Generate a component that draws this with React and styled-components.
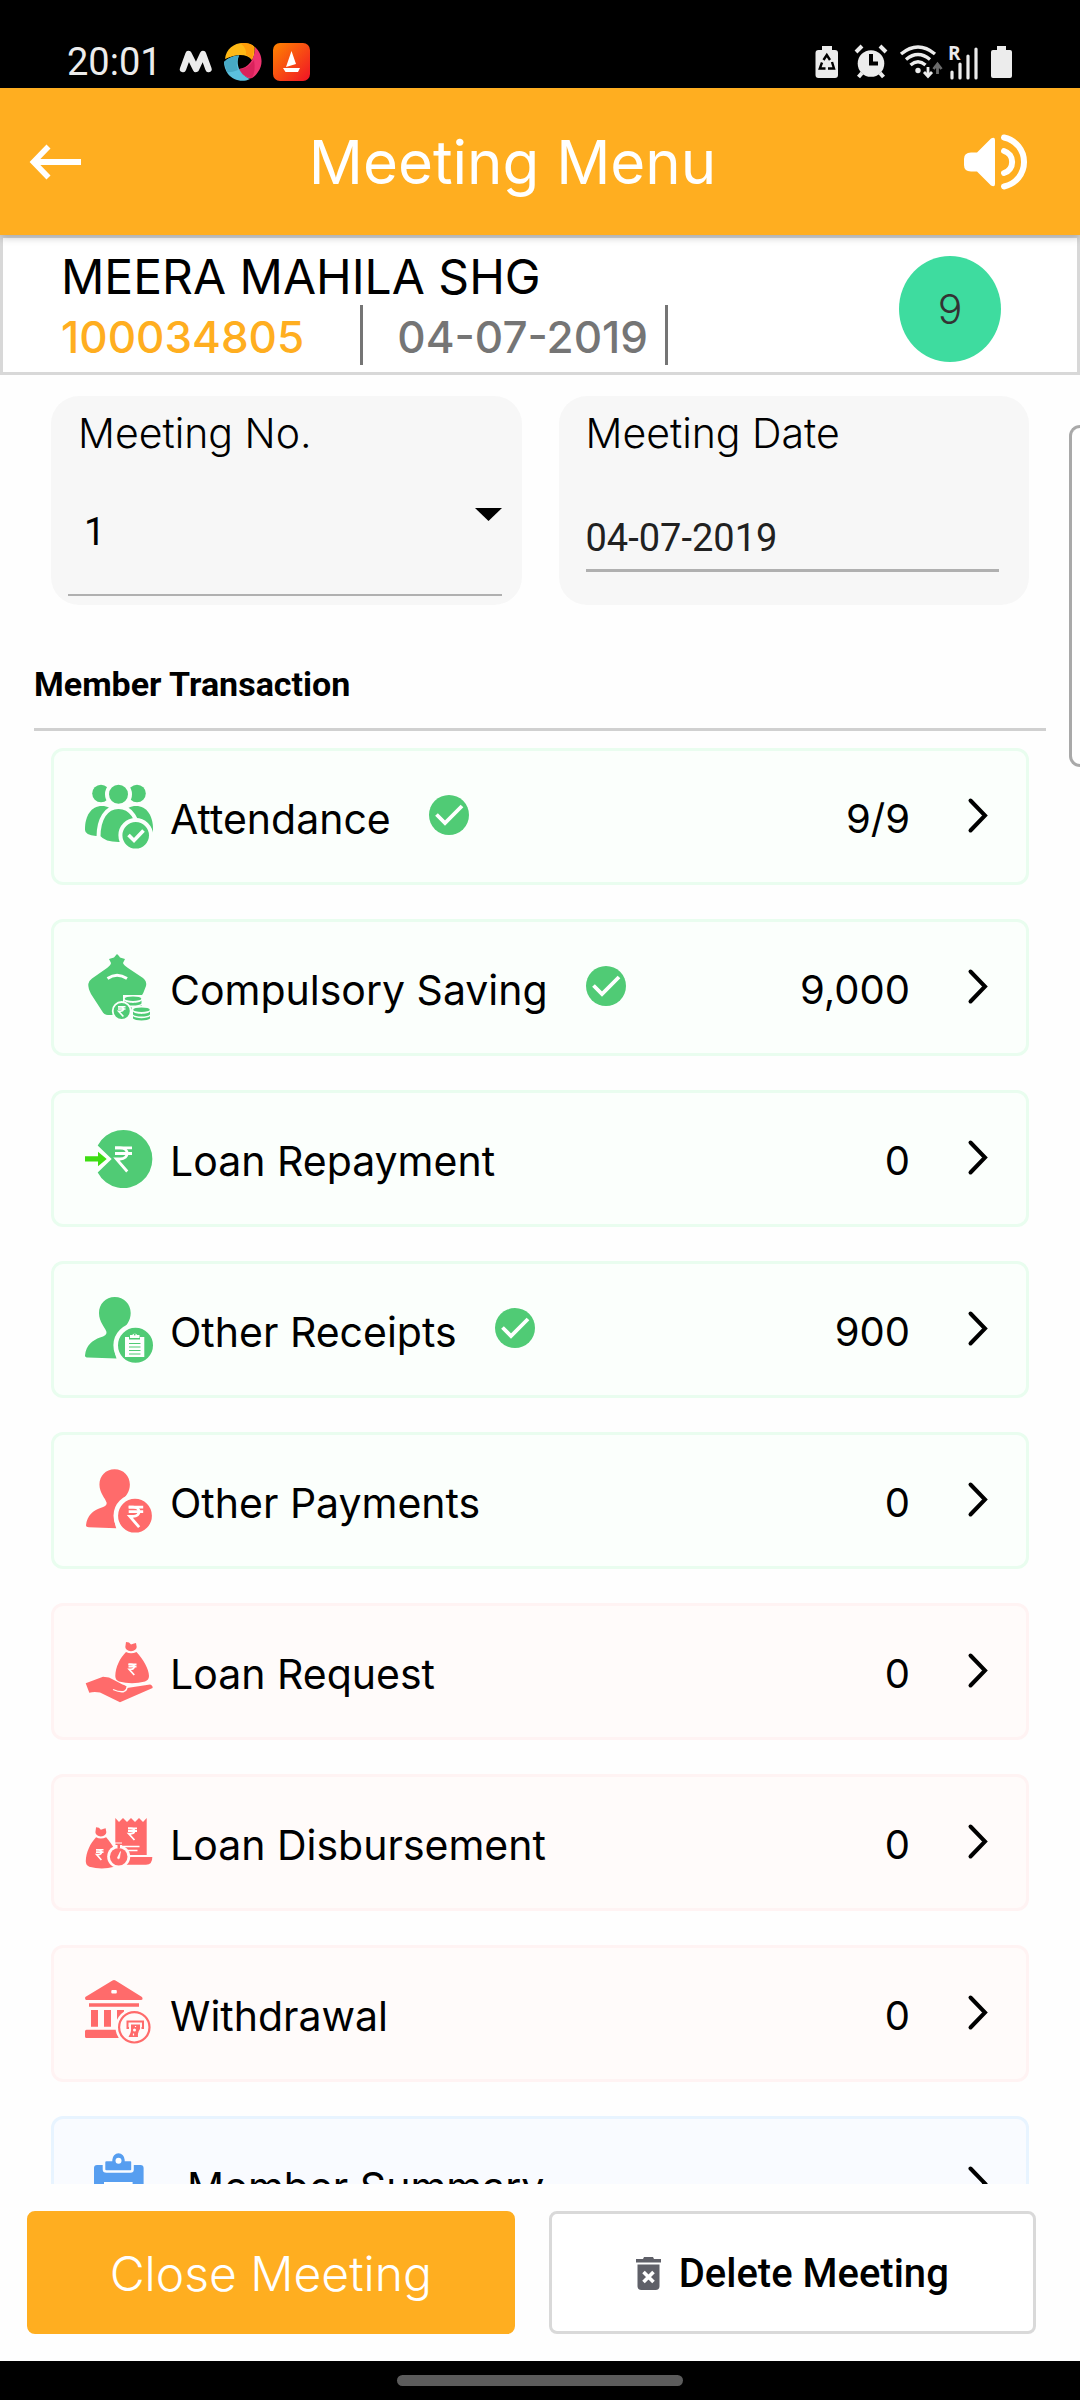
import React from "react";
import styled, { createGlobalStyle } from "styled-components";

const GlobalStyle = createGlobalStyle`
  *, *::before, *::after { box-sizing: border-box; }
  html, body { margin: 0; padding: 0; background: #fff; }
  body { font-family: Inter, "Noto Sans", sans-serif; color: #000; }
  button, input, select { font: inherit; color: inherit; margin: 0; }
  svg { display: block; flex: none; overflow: visible; }
`;

const TONES = {
  green: { fg: "#50cb75", bg: "#fbfffc", border: "#e9fdef" },
  payment: { fg: "#ff6b6b", bg: "#fbfffc", border: "#e9fdef" },
  red: { fg: "#ff6b6b", bg: "#fffbfa", border: "#fff3f3" },
  blue: { fg: "#579ef0", bg: "#f9fbff", border: "#e8f4ff" },
};

const Screen = styled.div`
  position: relative;
  display: flex;
  flex-direction: column;
  height: 100vh;
  overflow: hidden;
  background: #fefefe;
`;

const StatusBar = styled.div`
  display: flex;
  flex: none;
  align-items: flex-end;
  justify-content: space-between;
  height: 88px;
  padding: 0 67px 7px;
  background: #000;
  color: #ececec;
`;

const StatusGroup = styled.div`
  display: flex;
  align-items: center;
  height: 38px;
  gap: ${(p) => p.$gap}px;
`;

const Clock = styled.span`
  margin-right: 6px;
  font-family: Roboto, sans-serif;
  font-size: 38px;
  line-height: 40px;
`;

const Header = styled.header`
  position: relative;
  z-index: 1;
  display: flex;
  flex: none;
  align-items: center;
  height: 147px;
  padding: 0 52px 0 30px;
  background: #ffae20;
  color: #fff;
  box-shadow: 0 2px 8px rgba(0, 0, 0, 0.25);
`;

const IconButton = styled.button`
  display: flex;
  padding: 0 0 0 ${(p) => p.$lead || 0}px;
  border: 0;
  background: none;
  cursor: pointer;
`;

const Title = styled.h1`
  flex: 1;
  margin: 0;
  font-size: 60px;
  font-weight: 400;
  line-height: 68px;
  text-align: center;
`;

const GroupBar = styled.section`
  display: flex;
  flex: none;
  align-items: center;
  justify-content: space-between;
  height: 140px;
  padding: 4px 76px 0 58px;
  border: 3px solid #d8d8d8;
  background: #fff;
`;

const GroupName = styled.h2`
  margin: 0;
  font-size: 48px;
  font-weight: 400;
  line-height: 56px;
`;

const GroupMeta = styled.div`
  display: flex;
  font-size: 44px;
  font-weight: 500;
  line-height: 56px;
`;

const GroupId = styled.span`
  padding: 4px 56px 0 0;
  border-right: 3px solid #757575;
  color: #ffae20;
`;

const GroupDate = styled.span`
  padding: 4px 17px 0 34px;
  border-right: 3px solid #757575;
  color: #757575;
`;

const CountBadge = styled.div`
  display: flex;
  align-items: center;
  justify-content: center;
  width: 102px;
  height: 106px;
  margin-top: 4px;
  border-radius: 50%;
  background: #3edc9f;
  color: #333;
  font-size: 41px;
  font-weight: 300;
`;

const Main = styled.main`
  flex: 1;
  min-height: 0;
  overflow-y: auto;
  scrollbar-width: none;
`;

const Fields = styled.div`
  display: grid;
  grid-template-columns: repeat(2, minmax(0, 1fr));
  gap: 37px;
  padding: 21px 51px 0;
`;

const Field = styled.div`
  display: flex;
  flex-direction: column;
  height: 209px;
  padding-top: 13px;
  border-radius: 28px;
  background: #f7f7f7;
`;

const FieldLabel = styled.label`
  padding: 0 27px;
  font-size: 41px;
  font-weight: 300;
  line-height: 48px;
`;

const SelectBox = styled.div`
  display: grid;
  margin: 0 20px 0 17px;

  > * {
    grid-area: 1 / 1;
  }

  > svg {
    justify-self: end;
    margin-top: 51px;
    pointer-events: none;
  }
`;

const Select = styled.select`
  appearance: none;
  width: 100%;
  height: 139px;
  padding: 12px 40px 0 16px;
  border: 0;
  border-bottom: 2px solid #b0b0b0;
  border-radius: 0;
  background: none;
  font-family: Roboto, sans-serif;
  font-size: 38px;
`;

const DateInput = styled.input`
  height: 115px;
  margin: 0 30px 0 27px;
  padding: 49px 0 0;
  border: 0;
  border-bottom: 3px solid #b0b0b0;
  background: none;
  color: #212121;
  font-family: Roboto, sans-serif;
  font-size: 38px;
`;

const SectionTitle = styled.h2`
  margin: 55px 34px 17px;
  padding-bottom: 20px;
  border-bottom: 3px solid #d0d0d0;
  font-family: Roboto, sans-serif;
  font-size: 34px;
  font-weight: 700;
  line-height: 48px;
`;

const List = styled.ul`
  display: flex;
  flex-direction: column;
  gap: 34px;
  margin: 0;
  padding: 0 51px 34px;
  list-style: none;
`;

const Row = styled.button`
  display: flex;
  align-items: center;
  width: 100%;
  height: 137px;
  padding: 0 36px 0 31px;
  border: 3px solid ${(p) => TONES[p.$tone].border};
  border-radius: 12px;
  background: ${(p) => TONES[p.$tone].bg};
  color: #000;
  font-size: 41px;
  font-weight: 400;
  line-height: 48px;
  text-align: left;
  cursor: pointer;
`;

const RowLabel = styled.span`
  margin: 4px 38px 0 ${(p) => (p.$indent ? 34 : 17)}px;
`;

const RowValue = styled.span`
  margin: 4px 56px 0 auto;
  font-size: 40px;
`;

const RowMark = styled.svg`
  margin-bottom: 3px;
`;

const Footer = styled.footer`
  display: grid;
  flex: none;
  grid-template-columns: 1fr 1fr;
  gap: 34px;
  padding: 27px 44px 27px 27px;
  background: #fefefe;
`;

const Action = styled.button`
  display: flex;
  align-items: center;
  justify-content: center;
  gap: 18px;
  height: 123px;
  padding: 2px 0 0;
  border: 3px solid ${(p) => (p.$primary ? "#ffae20" : "#d9d9d9")};
  border-radius: 8px;
  background: ${(p) => (p.$primary ? "#ffae20" : "#fff")};
  color: ${(p) => (p.$primary ? "#fff" : "#000")};
  font-family: ${(p) => (p.$primary ? "Inter" : "Roboto")}, sans-serif;
  font-size: ${(p) => (p.$primary ? 48 : 40)}px;
  font-weight: ${(p) => (p.$primary ? 300 : 500)};
  cursor: pointer;
`;

const NavBar = styled.div`
  display: flex;
  flex: none;
  justify-content: center;
  height: 39px;
  padding-top: 14px;
  background: #000;
`;

const NavPill = styled.div`
  width: 286px;
  height: 11px;
  border-radius: 6px;
  background: #5c5c5c;
`;

const EdgeHandle = styled.div`
  position: absolute;
  z-index: 2;
  top: 425px;
  right: 0;
  width: 11px;
  height: 342px;
  border: 3px solid #a9a9a9;
  border-right: 0;
  border-radius: 12px 0 0 12px;
  background: #fff;
`;

function Rupee({ x, y, w, h, s, color = "#fff" }) {
  return (
    <g transform={`translate(${x} ${y})`} fill="none" stroke={color} strokeWidth={s}>
      <path d={`M0 ${s / 2}H${w}M0 ${h * 0.28}H${w}`} />
      <path d={`M0 ${s / 2}H${w * 0.3}C${w * 0.85} ${s / 2} ${w * 0.85} ${h * 0.5} ${w * 0.3} ${h * 0.5}H${w * 0.08}L${w * 0.72} ${h}`} />
    </g>
  );
}

function AttendanceArt({ fg, bg }) {
  return (
    <>
      <g fill={fg}>
        <circle cx="16" cy="10.5" r="8.8" />
        <circle cx="52" cy="10.5" r="8.8" />
        <path d="M0 46C0 33 6 23 17 23S34 33 34 46V53H11Q0 52 0 47Z" />
        <path d="M68 46C68 33 62 23 51 23S34 33 34 46V53H60Q68 52 68 47Z" />
      </g>
      <circle cx="33.5" cy="11.3" r="11.5" fill={fg} stroke={bg} strokeWidth="4" />
      <path d="M13.5 54C13.5 36 21 24 33.5 24S54 36 54 54Q48 61 33.5 61T13.5 54Z" fill={fg} stroke={bg} strokeWidth="4" />
      <circle cx="50.7" cy="52.3" r="15.3" fill={fg} stroke={bg} strokeWidth="4" />
      <path d="M43.5 52L49 57.5L58.5 47.5" fill="none" stroke="#fff" strokeWidth="3.6" />
    </>
  );
}

function CoinStack({ x, y, fg, bg }) {
  return (
    <g transform={`translate(${x} ${y})`}>
      <path d="M-1.5 -1.500H18.500V12H-1.500Z" fill={bg} />
      <ellipse cx="8.5" cy="2.2" rx="8.3" ry="2.3" fill={fg} />
      <path d="M0 4C2 7.2 15 7.2 17 4V7C15 9.8 2 9.8 0 7ZM0 8.6C2 11.4 15 11.4 17 8.6V11C15 13.6 2 13.6 0 11Z" fill={fg} />
    </g>
  );
}

function SavingArt({ fg, bg }) {
  return (
    <>
      <path
        d="M32 0Q34.5 2 35 3.5L40 5L38 9Q38.5 11 43 14L58 24Q62 27 61 32Q59 39 54 46V61H23Q19 61 17 57L6 40Q3 34 3.3 30Q3.5 27 7 24.500L22 14Q26 11 26 9L24 5L29 3.500Q30 2 32 0Z"
        fill={fg}
      />
      <path d="M22.500 24.500Q32 18 42 24.500" fill="none" stroke="#fff" strokeWidth="2.800" />
      <path d="M40 46H58V67H40Z" fill={bg} />
      <CoinStack x={39.5} y={42.5} fg={fg} bg={bg} />
      <CoinStack x={48} y={53.500} fg={fg} bg={bg} />
      <circle cx="36.700" cy="57" r="9" fill={fg} stroke={bg} strokeWidth="1.800" />
      <Rupee x={33} y={52} w={7.500} h={10.500} s={1.600} />
    </>
  );
}

function RepaymentArt({ fg }) {
  return (
    <>
      <path d="M12.700 20.500A29 29 0 1 1 12.700 47.500L26.700 34Z" fill={fg} />
      <path d="M0 31.300H13V26.700L21.700 34L13 41.300V36.500H0Z" fill="#3edd12" />
      <Rupee x={30} y={21.500} w={17} h={25} s={2.800} />
    </>
  );
}

function Person({ fg }) {
  return (
    <path
      d="M29.800 1C39 1 45.700 8 45.700 17C45.700 25 41 30 37 34C30 42 27.500 52 31.500 62.500L3 61.500Q0 61.500 0 59.500C1 49 8 44 15 41.500Q22 39.500 21.500 36C20 31 14 26 14 17C14 8 20.500 1 29.800 1Z"
      fill={fg}
    />
  );
}

function ReceiptsArt({ fg, bg }) {
  return (
    <>
      <Person fg={fg} />
      <circle cx="50.500" cy="49.300" r="19.800" fill={fg} stroke={bg} strokeWidth="4.600" />
      <path d="M40 41H44V43.500H55V41H59.300V61H40Z" fill="#fff" />
      <path d="M45 39H47.200A2.800 2.800 0 0 1 52.200 39H54.500V42H45Z" fill="#fff" />
      <circle cx="49.700" cy="38.500" r="0.900" fill={fg} />
      <path d="M44 47.500H55.500M44 51H55.500M44 54.500H55.500M44 58H55.500" stroke={fg} strokeWidth="1.200" />
    </>
  );
}

function PaymentsArt({ fg, bg }) {
  return (
    <>
      <g transform="translate(1 1.200) scale(0.960)">
        <Person fg={fg} />
      </g>
      <circle cx="50" cy="48.700" r="19.200" fill={fg} stroke={bg} strokeWidth="4.600" />
      <Rupee x={43.700} y={38.700} w={14.500} h={21.500} s={2.800} />
    </>
  );
}

function MoneyBag({ fg }) {
  return (
    <>
      <path d="M41 4L44 4.500L46 6.500L49 5.500L51 5L51.700 9Q51.500 12.500 46 13.200Q40.500 12.500 40.300 9Z" fill={fg} />
      <path d="M41 14Q46 16.500 51.500 14C58 21 64 31 64 38Q64 42 60 43.500Q47 47 34 43.500Q30.300 42 30.300 38C30.500 29 35 20 41 14Z" fill={fg} />
    </>
  );
}

function RequestArt({ fg, bg }) {
  return (
    <>
      <MoneyBag fg={fg} />
      <Rupee x={43.500} y={25.500} w={8} h={11.500} s={1.700} />
      <path
        d="M0.700 45.300L18 38.800L24 39.500Q31 43 37.500 46.500Q42.500 48 42 50L65 46.500Q68 47.500 67.600 50L35 64.300L15 54.500Q9 53.500 4.300 54.700Z"
        fill={fg}
      />
      <path d="M28 51.500Q35 54.500 39 53.500Q42 52.500 42 49" fill="none" stroke={bg} strokeWidth="1.300" />
    </>
  );
}

function DisbursementArt({ fg, bg }) {
  return (
    <>
      <g transform="translate(-28.300 14.200) scale(0.960 1)">
        <MoneyBag fg={fg} />
      </g>
      <Rupee x={11} y={40} w={7.500} h={11} s={1.600} />
      <path d="M30.300 9L34 13L38 9L42 13L46 9L50 13L54 9L58 13L61.700 9V46H30.300Z" fill={fg} />
      <Rupee x={43} y={18.500} w={9} h={12.500} s={1.800} />
      <path d="M37 37.500H54.500M40 41.500H52.500" stroke="#fff" strokeWidth="1.600" />
      <path d="M41 48H67.300Q67.500 55.700 61 55.700H38Z" fill={fg} />
      <circle cx="33.700" cy="47.700" r="11.500" fill={bg} />
      <path d="M30 33.500H37V37H30Z" fill={bg} />
      <path d="M30.500 34.500H37V36H35V39H32.500V36H30.500Z" fill={fg} />
      <circle cx="33.700" cy="47.700" r="8.800" fill={fg} />
      <path d="M35.500 42.500L34.500 49A1 1 0 0 1 32.500 48.500Z" fill="#fff" stroke="#fff" strokeWidth="0.600" />
    </>
  );
}

function WithdrawalArt({ fg, bg }) {
  return (
    <>
      <path d="M27.500 0.500Q29 -0.500 30.500 0.500L57 17Q58.500 20 56 20H1.500Q-0.500 19.500 0.300 17Z" fill={fg} />
      <rect x="26.300" y="10" width="5.500" height="3.500" rx="1" fill="#fff" />
      <path d="M4 23.300H54V26.700H4ZM6 30H13V46.700H6ZM19 30H26V46.700H19ZM32 30H39V46.700H32ZM1.500 49.700H42V58H1.500Q0 58 0 56.500V51.200Q0 49.700 1.500 49.700Z" fill={fg} />
      <circle cx="49.300" cy="47.300" r="18.800" fill={bg} />
      <circle cx="49.300" cy="47.300" r="15.200" fill="none" stroke={fg} strokeWidth="2.200" />
      <path d="M44 48H42.500V41.500H58V48H56.500" fill="none" stroke={fg} strokeWidth="2" />
      <path d="M46 44.500H55V49Q52.500 52 53 57H43.500Q46.500 52 46 48.500Z" fill={fg} />
      <circle cx="49.500" cy="50" r="1.500" fill="#fff" />
      <path d="M50.500 46V47M48.500 53.500V55.500" stroke="#fff" strokeWidth="1.200" />
    </>
  );
}

function SummaryArt({ fg, bg }) {
  return (
    <>
      <path d="M12 14H55.500Q58.600 14 58.600 17V65Q58.600 68 55.500 68H12Q9 68 9 65V17Q9 14 12 14Z" fill={fg} />
      <path d="M19 31H47.600V60H19Z" fill="#fff" />
      <path
        d="M21.500 9H26A7.500 8 0 0 1 41 9H45.500Q47.500 9 47.500 11V18.500Q47.500 20.500 45.500 20.500H21.500Q19 20.500 19 18.500V11Q19 9 21.500 9Z"
        fill={fg}
        stroke={bg}
        strokeWidth="2.600"
      />
      <circle cx="33.500" cy="9.700" r="3" fill="#fff" />
    </>
  );
}

const ROWS = [
  { label: "Attendance", value: "9/9", done: true, tone: "green", art: AttendanceArt },
  { label: "Compulsory Saving", value: "9,000", done: true, tone: "green", art: SavingArt },
  { label: "Loan Repayment", value: "0", tone: "green", art: RepaymentArt },
  { label: "Other Receipts", value: "900", done: true, tone: "green", art: ReceiptsArt },
  { label: "Other Payments", value: "0", tone: "payment", art: PaymentsArt },
  { label: "Loan Request", value: "0", tone: "red", art: RequestArt },
  { label: "Loan Disbursement", value: "0", tone: "red", art: DisbursementArt },
  { label: "Withdrawal", value: "0", tone: "red", art: WithdrawalArt },
  { label: "Member Summary", value: "", tone: "blue", art: SummaryArt, indent: true },
];

function MenuRow({ label, value, done, tone, art: Art, indent }) {
  const { fg, bg } = TONES[tone];
  return (
    <li>
      <Row type="button" $tone={tone}>
        <svg width="68" height="68" viewBox="0 0 68 68" aria-hidden="true">
          <Art fg={fg} bg={bg} />
        </svg>
        <RowLabel $indent={indent}>{label}</RowLabel>
        {done && (
          <RowMark width="40" height="40" viewBox="0 0 40 40" role="img" aria-label="Completed">
            <circle cx="20" cy="20" r="20" fill="#50cb75" />
            <path d="M7.500 19.500L16 28L33 11" fill="none" stroke="#fff" strokeWidth="3.800" />
          </RowMark>
        )}
        <RowValue>{value}</RowValue>
        <RowMark width="24" height="40" viewBox="0 0 24 40" aria-hidden="true">
          <path d="M4.500 5.500L19 20.500L4.500 35.500" fill="none" stroke="#000" strokeWidth="4" strokeLinecap="round" />
        </RowMark>
      </Row>
    </li>
  );
}

function NotificationIcons() {
  return (
    <>
      <svg width="34" height="38" viewBox="0 0 34 38" aria-hidden="true">
        <path d="M4 26L9.500 11L17 26L24 11L29.500 26" fill="none" stroke="#ececec" strokeWidth="6.400" strokeLinejoin="round" strokeLinecap="round" />
      </svg>
      <svg width="38" height="38" viewBox="0 0 38 38" aria-hidden="true">
        <path d="M1 16C2 6 10 0 19 0C24 0 28 1 30.500 4C31 9 30.500 13 28 17C23 11 14 10 1 16Z" fill="#ffb916" />
        <path d="M16 0C24-.500 28 1 30.500 4L28 17Q26 13 22 12Q23 5 16 0Z" fill="#ff9d0a" />
        <path d="M31 4C38 10 40 21 34 29C30 35 26 37 22 34C18 32 16 29 15 26C24 25 31 17 31 4Z" fill="#ef3470" />
        <path d="M15 26Q24 26 30 17Q32 28 28 35Q18 34 15 26Z" fill="#d9225c" />
        <path d="M0 19Q6 13 15 12.500C12 20 14 31 26 36C18 40 9 37 4 31Q0 25 0 19Z" fill="#5bc0de" />
        <path d="M0 19Q6 13 15 12.500Q11 20 14 27Q6 30 3 29Z" fill="#48a9c5" />
      </svg>
      <svg width="38" height="38" viewBox="0 0 38 38" aria-hidden="true">
        <defs>
          <linearGradient id="sail" x1="0" y1="0" x2="1" y2="1">
            <stop offset="0" stopColor="#ff8500" />
            <stop offset="1" stopColor="#f01226" />
          </linearGradient>
        </defs>
        <rect width="37" height="38" rx="7" fill="url(#sail)" />
        <path d="M18.500 8L23 21L13 24ZM10 25H27L25 29H12.500Z" fill="#fff" />
      </svg>
    </>
  );
}

function SystemIcons() {
  return (
    <svg width="198" height="38" viewBox="0 0 198 38" aria-hidden="true" fill="#ececec">
      <path d="M7 3H17V7H20Q23 7 23 10V32Q23 35 20 35H3.500Q0.500 35 0.500 32V10Q0.500 7 3.500 7H7Z" />
      <g fill="none" stroke="#000" strokeWidth="2.400">
        <path d="M8.500 17L11.800 12L15 17M17 19L19 25.500H13M10.500 25.500H4.800L7 19.500" />
      </g>
      <circle cx="56" cy="20.500" r="13.300" />
      <path d="M41 9L47 3M71 9L65 3" stroke="#ececec" strokeWidth="4" />
      <path d="M47 30L43.500 34M65 30L68.500 34" stroke="#ececec" strokeWidth="4" />
      <path d="M56 11V20.500H63" fill="none" stroke="#000" strokeWidth="4" />
      <g fill="none" stroke="#ececec" strokeWidth="3.400">
        <path d="M86 11Q103 -3 120 11" />
        <path d="M91 16.500Q103 6.500 115 16.500" />
        <path d="M95.500 22Q103 15.500 110.500 22" />
        <path d="M113 24V32M109 29L113 33.500L117 29" strokeWidth="2.800" />
      </g>
      <circle cx="103" cy="27.500" r="2.700" />
      <path d="M122.500 31V23M118.500 26L122.500 21L126.500 26" fill="none" stroke="#6b6b6b" strokeWidth="2.800" />
      <text x="133" y="17" fontFamily="Open Sans, sans-serif" fontSize="19" fontWeight="700">R</text>
      <path d="M137 29V35M145 21V35M153 13V35M161 6V35" stroke="#ececec" strokeWidth="3.200" strokeLinecap="round" />
      <path d="M182 3H191V7H195Q197 7 197 9V33Q197 35 195 35H178Q176 35 176 33V9Q176 7 178 7H182Z" />
    </svg>
  );
}

export default function App() {
  return (
    <>
      <GlobalStyle />
      <Screen>
        <StatusBar>
          <StatusGroup $gap={11}>
            <Clock>20:01</Clock>
            <NotificationIcons />
          </StatusGroup>
          <StatusGroup $gap={0}>
            <SystemIcons />
          </StatusGroup>
        </StatusBar>

        <Header>
          <IconButton type="button" aria-label="Back">
            <svg width="51" height="36" viewBox="0 0 51 36" fill="none" stroke="#fff">
              <path d="M4 18H51" strokeWidth="6" />
              <path d="M18.500 2.500L3.500 18L18.500 33.500" strokeWidth="5.600" />
            </svg>
          </IconButton>
          <Title>Meeting Menu</Title>
          <IconButton type="button" aria-label="Read aloud" $lead={20}>
            <svg width="64" height="56" viewBox="0 0 64 56">
              <path d="M7 18.500H13L27 4.500Q31 2.500 31 6V50Q31 53.500 27 51.500L13 37.500H7Q0 37.500 0 31V25Q0 18.500 7 18.500Z" fill="#fff" />
              <path d="M40 17A11.500 11.500 0 0 1 40 39M40 3.500A25 25 0 0 1 40 52.500" fill="none" stroke="#fff" strokeWidth="6" strokeLinecap="round" />
            </svg>
          </IconButton>
        </Header>

        <GroupBar>
          <div>
            <GroupName>MEERA MAHILA SHG</GroupName>
            <GroupMeta>
              <GroupId>100034805</GroupId>
              <GroupDate>04-07-2019</GroupDate>
            </GroupMeta>
          </div>
          <CountBadge>9</CountBadge>
        </GroupBar>

        <Main>
          <Fields>
            <Field>
              <FieldLabel htmlFor="meeting-no">Meeting No.</FieldLabel>
              <SelectBox>
                <Select id="meeting-no" defaultValue="1">
                  <option value="1">1</option>
                </Select>
                <svg width="27" height="13" viewBox="0 0 27 13" aria-hidden="true">
                  <path d="M0 0H27L13.500 13Z" />
                </svg>
              </SelectBox>
            </Field>
            <Field>
              <FieldLabel htmlFor="meeting-date">Meeting Date</FieldLabel>
              <DateInput id="meeting-date" type="text" defaultValue="04-07-2019" />
            </Field>
          </Fields>

          <SectionTitle>Member Transaction</SectionTitle>

          <List>
            {ROWS.map((row) => (
              <MenuRow key={row.label} {...row} />
            ))}
          </List>
        </Main>

        <Footer>
          <Action type="button" $primary>Close Meeting</Action>
          <Action type="button">
            <svg width="25" height="33" viewBox="0 0 25 33" aria-hidden="true">
              <path d="M0 2H7L8 0H17L18 2H25V5.500H0ZM1.500 7.500H23.500V29Q23.500 33 19.500 33H5.500Q1.500 33 1.500 29Z" fill="#5f6068" />
              <path d="M7.500 15L17.500 25M17.500 15L7.500 25" stroke="#fff" strokeWidth="3.600" />
            </svg>
            Delete Meeting
          </Action>
        </Footer>

        <NavBar>
          <NavPill />
        </NavBar>

        <EdgeHandle />
      </Screen>
    </>
  );
}
